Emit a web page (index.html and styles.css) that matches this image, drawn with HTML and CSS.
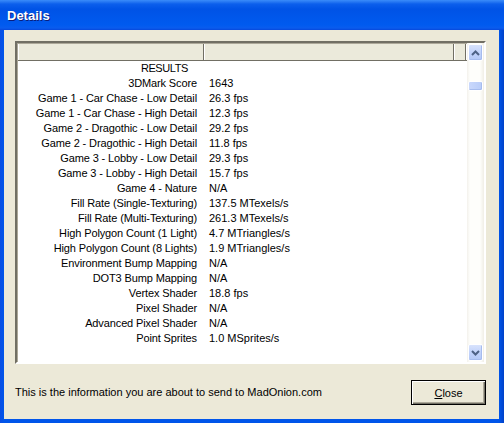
FILE: index.html
```html
<!DOCTYPE html>
<html>
<head>
<meta charset="utf-8">
<link rel="stylesheet" href="styles.css">
</head>
<body>
<div class="window">
  <div class="titlebar"><span class="title">Details</span></div>
  <div class="client">
    <div class="listbox">
      <div class="listarea">
        <div class="header">
          <div class="hcell c1"></div>
          <div class="hcell c2"></div>
          <div class="hcell c3"></div>
        </div>
        <div class="rows">
          <div class="row"><span class="lbl results">RESULTS</span><span class="val"></span></div>
          <div class="row"><span class="lbl">3DMark Score</span><span class="val">1643</span></div>
          <div class="row"><span class="lbl">Game 1 - Car Chase - Low Detail</span><span class="val">26.3 fps</span></div>
          <div class="row"><span class="lbl">Game 1 - Car Chase - High Detail</span><span class="val">12.3 fps</span></div>
          <div class="row"><span class="lbl">Game 2 - Dragothic - Low Detail</span><span class="val">29.2 fps</span></div>
          <div class="row"><span class="lbl">Game 2 - Dragothic - High Detail</span><span class="val">11.8 fps</span></div>
          <div class="row"><span class="lbl">Game 3 - Lobby - Low Detail</span><span class="val">29.3 fps</span></div>
          <div class="row"><span class="lbl">Game 3 - Lobby - High Detail</span><span class="val">15.7 fps</span></div>
          <div class="row"><span class="lbl">Game 4 - Nature</span><span class="val">N/A</span></div>
          <div class="row"><span class="lbl">Fill Rate (Single-Texturing)</span><span class="val">137.5 MTexels/s</span></div>
          <div class="row"><span class="lbl">Fill Rate (Multi-Texturing)</span><span class="val">261.3 MTexels/s</span></div>
          <div class="row"><span class="lbl">High Polygon Count (1 Light)</span><span class="val">4.7 MTriangles/s</span></div>
          <div class="row"><span class="lbl">High Polygon Count (8 Lights)</span><span class="val">1.9 MTriangles/s</span></div>
          <div class="row"><span class="lbl">Environment Bump Mapping</span><span class="val">N/A</span></div>
          <div class="row"><span class="lbl">DOT3 Bump Mapping</span><span class="val">N/A</span></div>
          <div class="row"><span class="lbl">Vertex Shader</span><span class="val">18.8 fps</span></div>
          <div class="row"><span class="lbl">Pixel Shader</span><span class="val">N/A</span></div>
          <div class="row"><span class="lbl">Advanced Pixel Shader</span><span class="val">N/A</span></div>
          <div class="row"><span class="lbl">Point Sprites</span><span class="val">1.0 MSprites/s</span></div>
        </div>
      </div>
      <div class="scrollbar">
        <div class="sbtn up"><svg width="9" height="6" viewBox="0 0 9 6"><path d="M1 5 L4.5 1.5 L8 5" fill="none" stroke="#4D6185" stroke-width="2"/></svg></div>
        <div class="track">
          <div class="thumb"></div>
        </div>
        <div class="sbtn down"><svg width="9" height="6" viewBox="0 0 9 6"><path d="M1 1 L4.5 4.5 L8 1" fill="none" stroke="#4D6185" stroke-width="2"/></svg></div>
      </div>
    </div>
    <div class="footer">
      <span class="info">This is the information you are about to send to MadOnion.com</span>
      <button class="btn"><u>C</u>lose</button>
    </div>
  </div>
</div>
</body>
</html>
```
FILE: styles.css
```css
html, body {
  margin: 0;
  padding: 0;
  background: #ffffff;
}
.window {
  width: 504px;
  height: 423px;
  display: flex;
  flex-direction: column;
  background: linear-gradient(90deg, #0A4EE4 0, #0055EA 4px, #0055EA 499px, #0041C8 504px);
  font-family: "Liberation Sans", Arial, sans-serif;
  font-size: 11px;
  color: #000;
  box-sizing: border-box;
}
.titlebar {
  height: 30px;
  flex: none;
  display: flex;
  align-items: center;
  padding-left: 7px;
  background: linear-gradient(180deg, #3A8CFA 0, #2576F2 2px, #0C5FEC 4px, #0053E6 9px, #0057EB 18px, #005BEF 25px, #0A5CEE 28px, #0648DB 30px);
}
.title {
  color: #fff;
  font-weight: bold;
  font-size: 13px;
  text-shadow: 1px 1px 0 #0A1E7C;
  margin-top: 1px;
}
.client {
  flex: 1;
  margin: 0 5px 4px 4px;
  background: #ECE9D8;
  display: flex;
  flex-direction: column;
}
.listbox {
  margin: 11px 13px 0 11px;
  height: 323px;
  box-sizing: border-box;
  border-style: solid;
  border-width: 2px;
  border-color: #716F64 #FFFFFF #FFFFFF #716F64;
  box-shadow: inset 1px 1px 0 #ACA899;
  background: #fff;
  display: flex;
}
.listarea {
  flex: 1;
  display: flex;
  flex-direction: column;
  overflow: hidden;
}
.header {
  display: flex;
  height: 16px;
  flex: none;
  border-bottom: 1px solid #716F64;
  margin-left: 1px;
  margin-top: 1px;
}
.hcell {
  box-sizing: border-box;
  height: 16px;
  background: #EBEADB;
  border-left: 1px solid #fff;
  border-right: 1px solid #716F64;
}
.c1 { width: 186px; }
.c2 { width: 250px; }
.c3 { width: 12px; }
.row {
  display: flex;
  height: 15px;
  line-height: 15px;
  white-space: nowrap;
}
.lbl {
  width: 186px;
  flex: none;
  text-align: right;
  padding-right: 6px;
  box-sizing: border-box;
  letter-spacing: -0.12px;
}
.lbl.results { padding-right: 15px; letter-spacing: -0.4px; }
.val {
  padding-left: 6px;
}
.scrollbar {
  width: 17px;
  flex: none;
  display: flex;
  flex-direction: column;
  background: linear-gradient(90deg, #F3F1EC 0, #FEFEFB 3px, #FEFEFB 13px, #F0EEE6 17px);
}
.sbtn {
  height: 17px;
  flex: none;
  box-sizing: border-box;
  margin: 0 1px;
  border: 1px solid #FFFFFF;
  border-radius: 2px;
  background: linear-gradient(180deg, #D8E3FC 0, #C2D3FB 50%, #B4C8F6 100%);
  box-shadow: inset -1px -1px 0 #A6BCEE;
  display: flex;
  align-items: center;
  justify-content: center;
}
.sbtn.up { margin-top: 1px; }
.sbtn.down { margin-bottom: 1px; }
.track {
  flex: 1;
  padding-top: 20px;
}
.thumb {
  height: 8px;
  margin: 0 1px;
  border-radius: 2px;
  border: 1px solid #fff;
  background: linear-gradient(90deg, #C9D8FC 0, #B8CCF8 100%);
  box-shadow: inset -1px -1px 0 #A6BCEE;
}
.footer {
  flex: 1;
  display: flex;
  align-items: center;
  justify-content: space-between;
  padding: 0 13px 0 11px;
}
.btn {
  width: 75px;
  height: 25px;
  box-sizing: border-box;
  font-family: "Liberation Sans", Arial, sans-serif;
  font-size: 11px;
  color: #000;
  background: #ECE9D8;
  border: 1px solid #000;
  box-shadow: inset 1px 1px 0 #fff, inset -1px -1px 0 #716F64, inset -2px -2px 0 #ACA899;
  padding: 0;
  margin-top: 2px;
}
```
